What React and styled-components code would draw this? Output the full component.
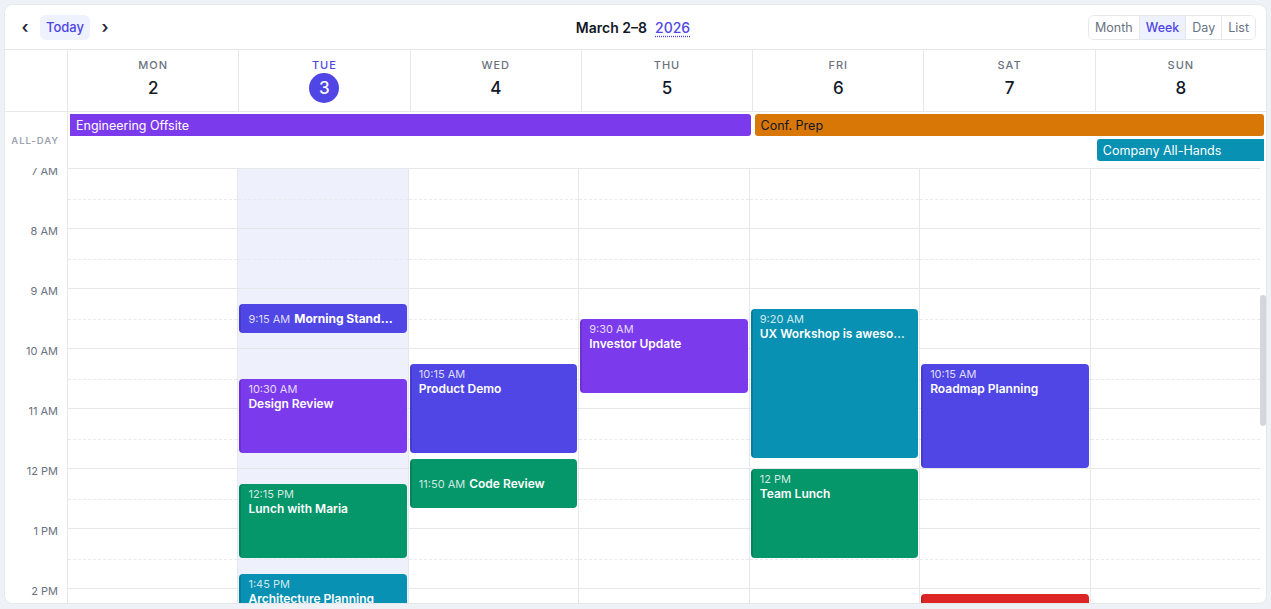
import React, { useLayoutEffect, useRef, useState } from "react";
import styled, { createGlobalStyle, css } from "styled-components";

const HOUR = 60;
const FIRST_VISIBLE_HOUR = 7;

const GlobalStyle = createGlobalStyle`
  * { box-sizing: border-box; }
  body {
    margin: 0;
    padding: 4px;
    background: #eef2f6;
    font-family: Inter, "Noto Sans", "Liberation Sans", sans-serif;
    color: #111827;
  }
`;

const Card = styled.div`
  height: 600px;
  background: #fff;
  border: 1px solid #e5e7eb;
  border-radius: 8px;
  overflow: hidden;
  display: flex;
  flex-direction: column;
`;

const Toolbar = styled.div`
  display: grid;
  grid-template-columns: 1fr auto 1fr;
  align-items: center;
  height: 45px;
  padding: 0 10px 0 8px;
  border-bottom: 1px solid #e5e7eb;
  flex-shrink: 0;
`;

const NavGroup = styled.div`
  display: flex;
  align-items: center;
  gap: 3px;
`;

const ArrowButton = styled.button`
  width: 24px;
  height: 25px;
  border: 0;
  background: none;
  padding: 0;
  font-family: inherit;
  font-size: 17px;
  font-weight: 600;
  line-height: 1;
  color: #1f2937;
  cursor: pointer;
`;

const TodayButton = styled.button`
  height: 25px;
  padding: 0 6px;
  border: 0;
  border-radius: 6px;
  background: #eef2ff;
  color: #4f46e5;
  font-family: inherit;
  font-size: 13px;
  font-weight: 500;
  cursor: pointer;
`;

const Title = styled.div`
  display: flex;
  align-items: baseline;
  gap: 8px;
  font-size: 14px;
  font-weight: 600;
  color: #111827;
  margin-left: -3px;
`;

const YearLink = styled.span`
  color: #4f46e5;
  font-weight: 500;
  text-decoration: underline dotted;
  text-underline-offset: 3px;
`;

const ViewSwitch = styled.div`
  justify-self: end;
  display: flex;
  height: 25px;
  border: 1px solid #e5e7eb;
  border-radius: 6px;
  overflow: hidden;
`;

const ViewButton = styled.button`
  border: 0;
  padding: 0 6px;
  font-family: inherit;
  font-size: 12.5px;
  background: ${(p) => (p.$active ? "#eef2ff" : "#fff")};
  color: ${(p) => (p.$active ? "#4f46e5" : "#6b7280")};
  font-weight: ${(p) => (p.$active ? 500 : 400)};
  & + & { border-left: 1px solid #e5e7eb; }
`;

const HeaderRow = styled.div`
  display: grid;
  grid-template-columns: 62px repeat(7, 1fr);
  height: 62px;
  border-bottom: 1px solid #e5e7eb;
  flex-shrink: 0;
`;

const DayHead = styled.div`
  border-left: 1px solid #e5e7eb;
  display: flex;
  flex-direction: column;
  align-items: center;
  justify-content: center;
  gap: 1px;
`;

const DayName = styled.div`
  font-size: 11px;
  line-height: 14px;
  font-weight: 500;
  letter-spacing: 0.09em;
  color: ${(p) => (p.$today ? "#4f46e5" : "#6b7280")};
`;

const DayNumber = styled.div`
  width: 30px;
  height: 30px;
  border-radius: 50%;
  display: grid;
  place-items: center;
  font-size: 17px;
  font-weight: 500;
  ${(p) =>
    p.$today
      ? css`
          background: #4f46e5;
          color: #fff;
        `
      : css`
          color: #111827;
        `}
`;

const AllDayRow = styled.div`
  display: grid;
  grid-template-columns: 62px 1fr;
  height: 56px;
  flex-shrink: 0;
`;

const AllDayLabel = styled.div`
  display: flex;
  align-items: center;
  justify-content: flex-end;
  padding-right: 8px;
  font-size: 9.5px;
  font-weight: 600;
  letter-spacing: 0.1em;
  color: #9ca3af;
`;

const AllDayGrid = styled.div`
  border-left: 1px solid #e5e7eb;
  display: grid;
  grid-template-columns: repeat(7, 1fr);
  grid-template-rows: 22px 22px;
  row-gap: 3px;
  padding-top: 2px;
`;

const AllDayBar = styled.div`
  grid-column: ${(p) => p.$start} / span ${(p) => p.$span};
  grid-row: ${(p) => p.$row};
  margin: 0 2px;
  padding: 0 6px;
  display: flex;
  align-items: center;
  background: ${(p) => p.$color};
  color: ${(p) => (p.$dark ? "#111827" : "#fff")};
  font-size: 12.5px;
  white-space: nowrap;
  overflow: hidden;
  border-radius: ${(p) =>
    p.$cont === "left" ? "0 3px 3px 0" : p.$cont === "right" ? "3px 0 0 3px" : "3px"};
`;

const BodyWrap = styled.div`
  position: relative;
  flex: 1;
  min-height: 0;
  display: flex;
`;

// native bar is hidden; the gutter on the right keeps room for the thumb
const Body = styled.div`
  flex: 1;
  overflow-y: scroll;
  padding-right: 6px;
  scrollbar-width: none;
  &::-webkit-scrollbar { display: none; }
`;

const ScrollThumb = styled.div`
  position: absolute;
  right: 0;
  width: 6px;
  border-radius: 3px;
  background: #d4d6db;
`;

const TimeGrid = styled.div`
  display: grid;
  grid-template-columns: 62px repeat(7, 1fr);
`;

const Gutter = styled.div`
  display: flex;
  flex-direction: column;
`;

const HourLabel = styled.div`
  height: ${HOUR}px;
  padding-right: 9px;
  text-align: right;
  font-size: 11px;
  line-height: 14px;
  color: #6b7280;
  transform: translateY(-4px);
`;

const DayColumn = styled.div`
  position: relative;
  border-left: 1px solid #e5e7eb;
  background: ${(p) => (p.$today ? "#eef1fc" : "transparent")};
`;

const Slot = styled.div`
  height: ${HOUR}px;
  border-top: 1px solid #e5e7eb;
  display: flex;
  flex-direction: column;
  justify-content: center;

  &::after {
    content: "";
    display: block;
    margin-top: 1px;
    border-top: 1px dashed #e8eaee;
  }
`;

const EventCard = styled.div`
  position: absolute;
  left: 1px;
  right: 1px;
  border-radius: 4px;
  border-left: 2px solid rgba(0, 0, 0, 0.12);
  background: ${(p) => p.$color};
  color: #fff;
  padding: 3px 8px 0 7px;
  overflow: hidden;
  display: flex;
  flex-direction: column;
  ${(p) =>
    p.$compact &&
    css`
      padding-top: 0;
      justify-content: center;
    `}
`;

const EventLine = styled.div`
  display: flex;
  align-items: baseline;
  gap: 4px;
  min-width: 0;
`;

const EventTime = styled.div`
  font-size: 11px;
  line-height: 14px;
  color: rgba(255, 255, 255, 0.82);
  white-space: nowrap;
  flex-shrink: 0;
`;

const EventTitle = styled.div`
  font-size: 12px;
  line-height: 15px;
  font-weight: ${(p) => (p.$bold ? 700 : 600)};
  white-space: nowrap;
  overflow: hidden;
  text-overflow: ellipsis;
  min-width: 0;
`;

const INDIGO = "#4f46e5";
const PURPLE = "#7c3aed";
const GREEN = "#059669";
const TEAL = "#0891b2";
const ORANGE = "#d97706";
const RED = "#dc2626";

const days = [
  { name: "MON", date: 2 },
  { name: "TUE", date: 3, today: true },
  { name: "WED", date: 4 },
  { name: "THU", date: 5 },
  { name: "FRI", date: 6 },
  { name: "SAT", date: 7 },
  { name: "SUN", date: 8 },
];

const allDayEvents = [
  { title: "Engineering Offsite", start: 1, span: 4, row: 1, color: PURPLE, cont: "left" },
  { title: "Conf. Prep", start: 5, span: 3, row: 1, color: ORANGE, dark: true },
  { title: "Company All-Hands", start: 7, span: 1, row: 2, color: TEAL, cont: "right" },
];

// start is minutes from midnight, len is duration in minutes
const timedEvents = [
  [],
  [
    { title: "Morning Standup Sync", start: 555, len: 30, color: INDIGO, bold: true },
    { title: "Design Review", start: 630, len: 75, color: PURPLE },
    { title: "Lunch with Maria", start: 735, len: 75, color: GREEN },
    { title: "Architecture Planning", start: 825, len: 90, color: TEAL },
  ],
  [
    { title: "Product Demo", start: 615, len: 90, color: INDIGO },
    { title: "Code Review", start: 710, len: 50, color: GREEN },
  ],
  [{ title: "Investor Update", start: 570, len: 75, color: PURPLE }],
  [
    { title: "UX Workshop is awesome and fun", start: 560, len: 150, color: TEAL },
    { title: "Team Lunch", start: 720, len: 90, color: GREEN },
  ],
  [
    { title: "Roadmap Planning", start: 615, len: 105, color: INDIGO },
    { title: "Client Call", start: 845, len: 45, color: RED },
  ],
  [],
];

const hours = Array.from({ length: 24 }, (_, i) => i);

const hourLabel = (h) => {
  const suffix = h < 12 ? "AM" : "PM";
  const n = h % 12 === 0 ? 12 : h % 12;
  return `${n} ${suffix}`;
};

const formatTime = (mins) => {
  const h = Math.floor(mins / 60);
  const m = mins % 60;
  const suffix = h < 12 ? "AM" : "PM";
  const n = h % 12 === 0 ? 12 : h % 12;
  return m ? `${n}:${String(m).padStart(2, "0")} ${suffix}` : `${n} ${suffix}`;
};

const CalendarEvent = ({ event }) => {
  const compact = event.len < 60;
  const style = { top: event.start + 1, height: event.len - 1 };
  return (
    <EventCard $color={event.color} $compact={compact} style={style}>
      {compact ? (
        <EventLine>
          <EventTime>{formatTime(event.start)}</EventTime>
          <EventTitle $bold={event.bold}>{event.title}</EventTitle>
        </EventLine>
      ) : (
        <>
          <EventTime>{formatTime(event.start)}</EventTime>
          <EventTitle>{event.title}</EventTitle>
        </>
      )}
    </EventCard>
  );
};

const App = () => {
  const bodyRef = useRef(null);
  const [thumb, setThumb] = useState({ top: 0, height: 0 });

  const measure = () => {
    const el = bodyRef.current;
    if (!el) return;
    const ratio = el.clientHeight / el.scrollHeight;
    setThumb({ top: el.scrollTop * ratio, height: el.clientHeight * ratio });
  };

  useLayoutEffect(() => {
    if (bodyRef.current) bodyRef.current.scrollTop = FIRST_VISIBLE_HOUR * HOUR;
    measure();
  }, []);

  return (
    <>
      <GlobalStyle />
      <Card>
        <Toolbar>
          <NavGroup>
            <ArrowButton aria-label="Previous week">‹</ArrowButton>
            <TodayButton>Today</TodayButton>
            <ArrowButton aria-label="Next week">›</ArrowButton>
          </NavGroup>
          <Title>
            <span>March 2–8</span>
            <YearLink>2026</YearLink>
          </Title>
          <ViewSwitch>
            <ViewButton>Month</ViewButton>
            <ViewButton $active>Week</ViewButton>
            <ViewButton>Day</ViewButton>
            <ViewButton>List</ViewButton>
          </ViewSwitch>
        </Toolbar>

        <HeaderRow>
          <div />
          {days.map((d) => (
            <DayHead key={d.name}>
              <DayName $today={d.today}>{d.name}</DayName>
              <DayNumber $today={d.today}>{d.date}</DayNumber>
            </DayHead>
          ))}
        </HeaderRow>

        <AllDayRow>
          <AllDayLabel>ALL-DAY</AllDayLabel>
          <AllDayGrid>
            {allDayEvents.map((e) => (
              <AllDayBar
                key={e.title}
                $start={e.start}
                $span={e.span}
                $row={e.row}
                $color={e.color}
                $dark={e.dark}
                $cont={e.cont}
              >
                {e.title}
              </AllDayBar>
            ))}
          </AllDayGrid>
        </AllDayRow>

        <BodyWrap>
          <Body ref={bodyRef} onScroll={measure}>
            <TimeGrid>
              <Gutter>
                {hours.map((h) => (
                  <HourLabel key={h}>{h === 0 ? "" : hourLabel(h)}</HourLabel>
                ))}
              </Gutter>
              {days.map((d, i) => (
                <DayColumn key={d.name} $today={d.today}>
                  {hours.map((h) => (
                    <Slot key={h} />
                  ))}
                  {timedEvents[i].map((e) => (
                    <CalendarEvent key={e.title} event={e} />
                  ))}
                </DayColumn>
              ))}
            </TimeGrid>
          </Body>
          <ScrollThumb style={{ top: thumb.top, height: thumb.height }} />
        </BodyWrap>
      </Card>
    </>
  );
};

export default App;
